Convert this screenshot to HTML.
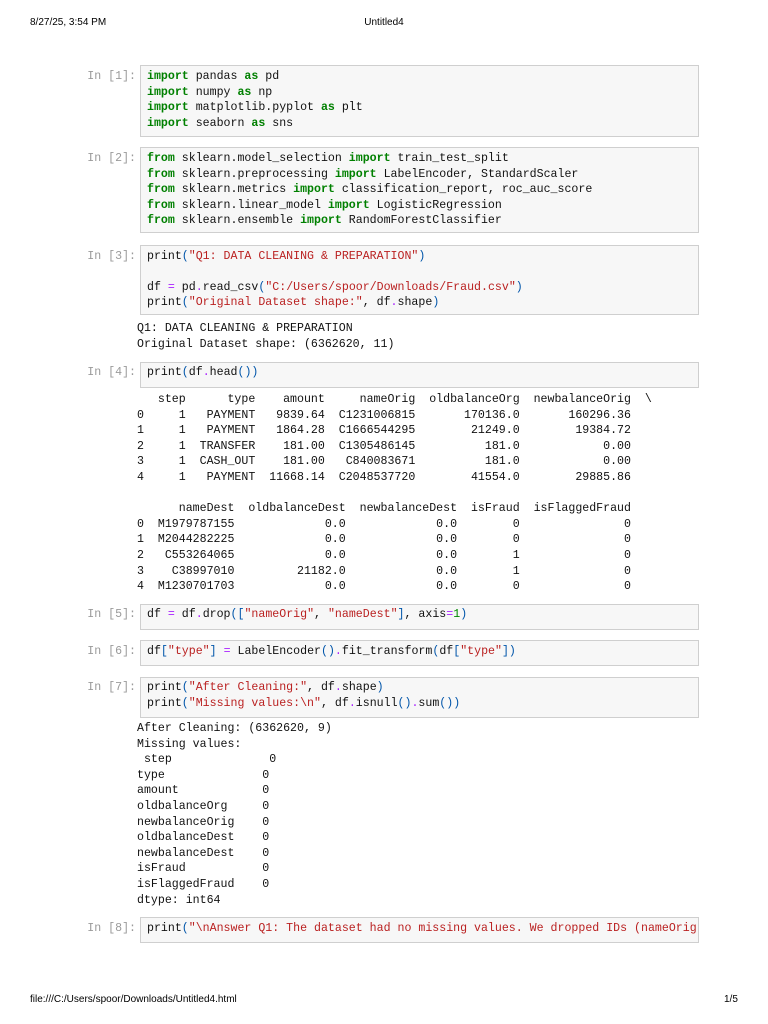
<!DOCTYPE html>
<html><head><meta charset="utf-8"><style>
body{margin:0;width:768px;height:1024px;background:#fff;position:relative;overflow:hidden}
.h{position:absolute;font-family:"Liberation Sans",Arial,sans-serif;font-size:10px;color:#000;line-height:12px}
.box{position:absolute;left:140px;width:559px;background:#f7f7f7;border:1px solid #cfcfcf;box-sizing:border-box}
.p{position:absolute;left:60px;width:76px;text-align:right;font-family:"Liberation Mono",monospace;font-size:11.6px;color:#9a9a9a;line-height:15.6px;white-space:pre}
.l{position:absolute;font-family:"Liberation Mono",monospace;font-size:11.6px;line-height:15.6px;white-space:pre;color:#111}
.c{left:147px;overflow:hidden;width:550px}
.o{left:137px}
.k{color:#008000;font-weight:bold}
.s{color:#ba2121}
.b{color:#0055aa}
.op{color:#aa22ff}
.n{color:#008800}
</style></head><body>
<div class="h" style="left:30px;top:17px">8/27/25, 3:54 PM</div>
<div class="h" style="left:0;width:768px;text-align:center;top:17px">Untitled4</div>

<div class="box" style="top:65px;height:72px"></div>
<div class="p" style="top:69px">In [1]:</div>
<div class="l c" style="top:69px"><span class="k">import</span> pandas <span class="k">as</span> pd</div>
<div class="l c" style="top:85px"><span class="k">import</span> numpy <span class="k">as</span> np</div>
<div class="l c" style="top:100px"><span class="k">import</span> matplotlib.pyplot <span class="k">as</span> plt</div>
<div class="l c" style="top:116px"><span class="k">import</span> seaborn <span class="k">as</span> sns</div>

<div class="box" style="top:147px;height:86px"></div>
<div class="p" style="top:151px">In [2]:</div>
<div class="l c" style="top:151px"><span class="k">from</span> sklearn.model_selection <span class="k">import</span> train_test_split</div>
<div class="l c" style="top:167px"><span class="k">from</span> sklearn.preprocessing <span class="k">import</span> LabelEncoder, StandardScaler</div>
<div class="l c" style="top:182px"><span class="k">from</span> sklearn.metrics <span class="k">import</span> classification_report, roc_auc_score</div>
<div class="l c" style="top:198px"><span class="k">from</span> sklearn.linear_model <span class="k">import</span> LogisticRegression</div>
<div class="l c" style="top:213px"><span class="k">from</span> sklearn.ensemble <span class="k">import</span> RandomForestClassifier</div>

<div class="box" style="top:245px;height:70px"></div>
<div class="p" style="top:249px">In [3]:</div>
<div class="l c" style="top:249px">print<span class="b">(</span><span class="s">"Q1: DATA CLEANING &amp; PREPARATION"</span><span class="b">)</span></div>
<div class="l c" style="top:280px">df <span class="op">=</span> pd<span class="op">.</span>read_csv<span class="b">(</span><span class="s">"C:/Users/spoor/Downloads/Fraud.csv"</span><span class="b">)</span></div>
<div class="l c" style="top:295px">print<span class="b">(</span><span class="s">"Original Dataset shape:"</span>, df<span class="op">.</span>shape<span class="b">)</span></div>
<div class="l o" style="top:321px">Q1: DATA CLEANING &amp; PREPARATION
Original Dataset shape: (6362620, 11)</div>

<div class="box" style="top:362px;height:26px"></div>
<div class="p" style="top:365px">In [4]:</div>
<div class="l c" style="top:365px">print<span class="b">(</span>df<span class="op">.</span>head<span class="b">())</span></div>
<div class="l o" style="top:392px">   step      type    amount     nameOrig  oldbalanceOrg  newbalanceOrig  \
0     1   PAYMENT   9839.64  C1231006815       170136.0       160296.36   
1     1   PAYMENT   1864.28  C1666544295        21249.0        19384.72   
2     1  TRANSFER    181.00  C1305486145          181.0            0.00   
3     1  CASH_OUT    181.00   C840083671          181.0            0.00   
4     1   PAYMENT  11668.14  C2048537720        41554.0        29885.86   

      nameDest  oldbalanceDest  newbalanceDest  isFraud  isFlaggedFraud  
0  M1979787155             0.0             0.0        0               0  
1  M2044282225             0.0             0.0        0               0  
2   C553264065             0.0             0.0        1               0  
3    C38997010         21182.0             0.0        1               0  
4  M1230701703             0.0             0.0        0               0  </div>

<div class="box" style="top:604px;height:26px"></div>
<div class="p" style="top:607px">In [5]:</div>
<div class="l c" style="top:607px">df <span class="op">=</span> df<span class="op">.</span>drop<span class="b">([</span><span class="s">"nameOrig"</span>, <span class="s">"nameDest"</span><span class="b">]</span>, axis<span class="op">=</span><span class="n">1</span><span class="b">)</span></div>

<div class="box" style="top:640px;height:26px"></div>
<div class="p" style="top:644px">In [6]:</div>
<div class="l c" style="top:644px">df<span class="b">[</span><span class="s">"type"</span><span class="b">]</span> <span class="op">=</span> LabelEncoder<span class="b">()</span><span class="op">.</span>fit_transform<span class="b">(</span>df<span class="b">[</span><span class="s">"type"</span><span class="b">])</span></div>

<div class="box" style="top:677px;height:41px"></div>
<div class="p" style="top:680px">In [7]:</div>
<div class="l c" style="top:680px">print<span class="b">(</span><span class="s">"After Cleaning:"</span>, df<span class="op">.</span>shape<span class="b">)</span></div>
<div class="l c" style="top:696px">print<span class="b">(</span><span class="s">"Missing values:\n"</span>, df<span class="op">.</span>isnull<span class="b">()</span><span class="op">.</span>sum<span class="b">())</span></div>
<div class="l o" style="top:721px">After Cleaning: (6362620, 9)
Missing values:
 step              0
type              0
amount            0
oldbalanceOrg     0
newbalanceOrig    0
oldbalanceDest    0
newbalanceDest    0
isFraud           0
isFlaggedFraud    0
dtype: int64</div>

<div class="box" style="top:917px;height:26px"></div>
<div class="p" style="top:921px">In [8]:</div>
<div class="l c" style="top:921px">print<span class="b">(</span><span class="s">"\nAnswer Q1: The dataset had no missing values. We dropped IDs (nameOrig, nameDest)</span></div>

<div class="h" style="left:30px;top:994px">file:///C:/Users/spoor/Downloads/Untitled4.html</div>
<div class="h" style="left:724px;top:994px">1/5</div>
</body></html>
